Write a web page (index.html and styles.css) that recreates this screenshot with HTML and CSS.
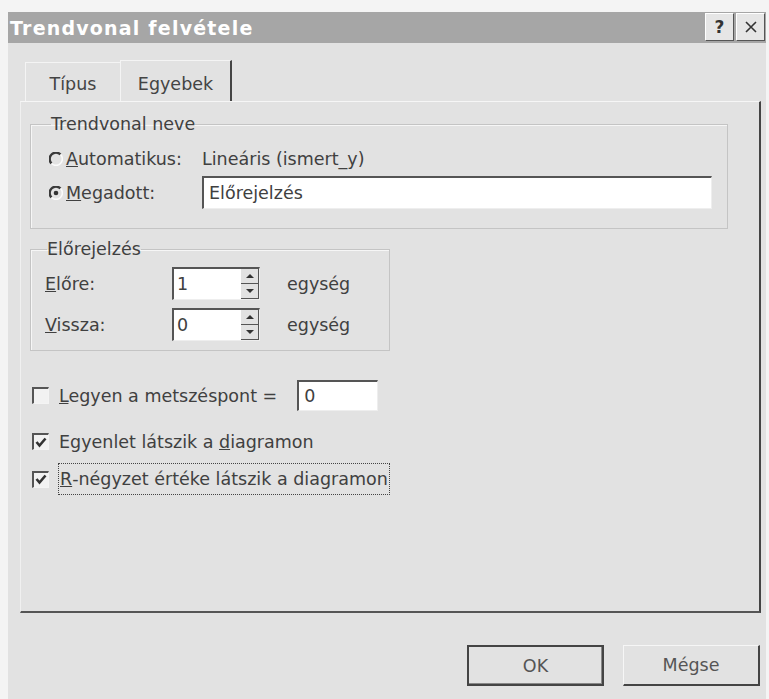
FILE: index.html
```html
<!DOCTYPE html>
<html lang="hu">
<head>
<meta charset="utf-8">
<title>Trendvonal felvétele</title>
<link rel="stylesheet" href="styles.css">
</head>
<body>
<div class="screen">
  <div class="window">
    <div class="titlebar">
      <span class="title">Trendvonal felvétele</span>
      <div class="caption-btns">
        <span class="cbtn">?</span>
        <span class="cbtn">
          <svg width="14" height="14" viewBox="0 0 14 14"><path d="M2 2 L12 12 M12 2 L2 12" stroke="#333" stroke-width="1.6" fill="none"/></svg>
        </span>
      </div>
    </div>

    <div class="tabs">
      <div class="tab">Típus</div>
      <div class="tab active">Egyebek</div>
    </div>

    <div class="panel">
      <fieldset class="group name-group">
        <legend>Trendvonal neve</legend>
        <div class="row radio-row">
          <svg class="radio" width="14" height="14" viewBox="0 0 14 14"><path d="M11.5 2.5 A6 6 0 1 0 2.5 11.5" stroke="#3a3a3a" stroke-width="2.4" fill="none"/><path d="M2.5 11.5 A6 6 0 0 0 11.5 2.5" stroke="#fafafa" stroke-width="1.6" fill="none"/></svg>
          <span class="label"><u>A</u>utomatikus:</span>
          <span class="value">Lineáris (ismert_y)</span>
        </div>
        <div class="row radio-row">
          <svg class="radio" width="14" height="14" viewBox="0 0 14 14"><path d="M11.5 2.5 A6 6 0 1 0 2.5 11.5" stroke="#3a3a3a" stroke-width="2.4" fill="none"/><path d="M2.5 11.5 A6 6 0 0 0 11.5 2.5" stroke="#fafafa" stroke-width="1.6" fill="none"/><circle cx="7" cy="7" r="2.3" fill="#333"/></svg>
          <span class="label"><u>M</u>egadott:</span>
          <span class="textbox name-box">Előrejelzés</span>
        </div>
      </fieldset>

      <fieldset class="group forecast-group">
        <legend>Előrejelzés</legend>
        <div class="row spin-row">
          <span class="spin-label"><u>E</u>lőre:</span>
          <span class="spin">
            <span class="spin-value">1</span>
            <span class="spin-arrows">
              <span class="arrow up"></span>
              <span class="arrow down"></span>
            </span>
          </span>
          <span class="unit">egység</span>
        </div>
        <div class="row spin-row">
          <span class="spin-label"><u>V</u>issza:</span>
          <span class="spin">
            <span class="spin-value">0</span>
            <span class="spin-arrows">
              <span class="arrow up"></span>
              <span class="arrow down"></span>
            </span>
          </span>
          <span class="unit">egység</span>
        </div>
      </fieldset>

      <div class="checks">
        <div class="check-row">
          <span class="checkbox"></span>
          <span class="check-text"><u>L</u>egyen a metszéspont =</span>
          <span class="textbox intercept-box">0</span>
        </div>
        <div class="check-row">
          <span class="checkbox checked"><svg width="12" height="11" viewBox="0 0 12 11"><path d="M1.5 5 L4.5 8.5 L10.5 1.5" stroke="#333" stroke-width="2.6" fill="none"/></svg></span>
          <span class="check-text">Egyenlet látszik a <u>d</u>iagramon</span>
        </div>
        <div class="check-row">
          <span class="checkbox checked"><svg width="12" height="11" viewBox="0 0 12 11"><path d="M1.5 5 L4.5 8.5 L10.5 1.5" stroke="#333" stroke-width="2.6" fill="none"/></svg></span>
          <span class="check-text focused"><u>R</u>-négyzet értéke látszik a diagramon</span>
        </div>
      </div>
    </div>

    <div class="buttons">
      <span class="btn default">OK</span>
      <span class="btn">Mégse</span>
    </div>
  </div>
</div>
</body>
</html>
```
FILE: styles.css
```css
html, body {
  margin: 0;
  padding: 0;
  background: #f4f4f4;
}

.screen {
  padding-top: 12px;
  padding-left: 8px;
  font-family: "DejaVu Sans", Verdana, sans-serif;
  font-size: 17.5px;
  color: #404040;
}

.window {
  width: 758px;
  height: 700px;
  background: #e2e2e2;
  display: flex;
  flex-direction: column;
}

/* caption */
.titlebar {
  height: 31px;
  background: #a6a6a6;
  display: flex;
  align-items: center;
  justify-content: space-between;
}

.title {
  color: #fff;
  font-weight: bold;
  font-size: 19px;
  padding-left: 2px;
  letter-spacing: 1.2px;
}

.caption-btns {
  display: flex;
  gap: 2px;
  padding-right: 1px;
  align-self: stretch;
  padding-top: 1px;
  padding-bottom: 2px;
}

.cbtn {
  width: 27px;
  background: #e6e6e6;
  border-right: 1px solid #555;
  border-bottom: 1px solid #555;
  border-top: 1px solid #fff;
  border-left: 1px solid #fff;
  display: flex;
  align-items: center;
  justify-content: center;
  font-weight: bold;
  font-size: 17px;
  color: #333;
}

/* tab strip */
.tabs {
  height: 58px;
  box-sizing: border-box;
  padding-top: 19px;
  padding-left: 17px;
  display: flex;
  align-items: stretch;
}

.tab {
  width: 95px;
  display: flex;
  align-items: center;
  justify-content: center;
  padding-top: 3px;
  box-sizing: border-box;
  border-top: 1px solid #f4f4f4;
  border-left: 1px solid #f4f4f4;
  color: #444;
}

.tab.active {
  width: 112px;
  border-right: 2px solid #444;
  margin-top: -2px;
  padding-top: 5px;
}

/* page body */
.panel {
  margin-left: 12px;
  width: 741px;
  height: 512px;
  box-sizing: border-box;
  border-top: 1px solid #f6f6f6;
  border-left: 1px solid #f0f0f0;
  border-right: 2px solid #444;
  border-bottom: 2px solid #555;
  padding: 13px 0 0 9px;
}

.group {
  margin: 0;
  border: 1px solid #c4c4c4;
  box-shadow: inset 1px 1px 0 #f6f6f6;
  box-sizing: border-box;
}

.group legend {
  padding: 0;
  margin-left: 2px;
  line-height: 18px;
  color: #404040;
}

.name-group {
  width: 698px;
  height: 114px;
  padding: 13px 0 0 18px;
}

.row {
  display: flex;
  align-items: center;
}

.radio-row {
  height: 26px;
}

.radio-row + .radio-row {
  margin-top: 4px;
  height: 33px;
}

.radio {
  flex: none;
  margin-right: 3px;
}

.label {
  width: 136px;
  flex: none;
}

.textbox {
  box-sizing: border-box;
  background: #fff;
  border-top: 2px solid #555;
  border-left: 2px solid #555;
  border-right: 1px solid #eee;
  border-bottom: 1px solid #eee;
  display: flex;
  align-items: center;
  padding-left: 5px;
  color: #404040;
}

.name-box {
  width: 510px;
  height: 33px;
}

.forecast-group {
  margin-top: 11px;
  width: 360px;
  height: 111px;
  padding: 9px 0 0 14px;
}

.spin-row {
  height: 33px;
}

.spin-row + .spin-row {
  margin-top: 8px;
}

.spin-label {
  width: 127px;
  flex: none;
}

.spin {
  width: 88px;
  height: 33px;
  box-sizing: border-box;
  border-top: 2px solid #555;
  border-left: 2px solid #555;
  border-right: 1px solid #eee;
  border-bottom: 1px solid #eee;
  display: flex;
  background: #fff;
}

.spin-value {
  flex: 1;
  display: flex;
  align-items: center;
  padding-left: 3px;
}

.spin-arrows {
  width: 18px;
  display: flex;
  flex-direction: column;
  background: #e2e2e2;
}

.arrow {
  flex: 1;
  display: flex;
  align-items: center;
  justify-content: center;
  border-right: 1px solid #555;
  border-bottom: 1px solid #555;
}

.arrow.up::after {
  content: "";
  border-left: 4px solid transparent;
  border-right: 4px solid transparent;
  border-bottom: 4px solid #333;
}

.arrow.down::after {
  content: "";
  border-left: 4px solid transparent;
  border-right: 4px solid transparent;
  border-top: 4px solid #333;
}

.unit {
  margin-left: 27px;
}

/* check boxes */
.checks {
  margin-top: 29px;
  padding-left: 2px;
  display: flex;
  flex-direction: column;
}

.check-row {
  display: flex;
  align-items: center;
  height: 31px;
}

.check-row + .check-row {
  margin-top: 15px;
}

.check-row:last-child {
  margin-top: 6px;
  height: 32px;
}

.checkbox {
  width: 17px;
  height: 17px;
  box-sizing: border-box;
  border-top: 2px solid #555;
  border-left: 2px solid #555;
  border-right: 1px solid #f4f4f4;
  border-bottom: 1px solid #f4f4f4;
  background: #f2f2f2;
  margin-right: 10px;
  display: flex;
  align-items: center;
  justify-content: center;
  flex: none;
}

.check-text {
  white-space: nowrap;
}

.check-text.focused {
  border: 1px dotted #444;
  height: 32px;
  box-sizing: border-box;
  display: flex;
  align-items: center;
  padding: 0 1px;
  margin-left: -1px;
}

.intercept-box {
  margin-left: 20px;
  width: 81px;
  height: 31px;
}

/* dialog buttons */
.buttons {
  display: flex;
  justify-content: flex-end;
  gap: 19px;
  margin-top: 32px;
  padding-right: 6px;
}

.btn {
  width: 137px;
  height: 41px;
  box-sizing: border-box;
  display: flex;
  align-items: center;
  justify-content: center;
  border-top: 1px solid #f6f6f6;
  border-left: 1px solid #f6f6f6;
  border-right: 2px solid #444;
  border-bottom: 2px solid #444;
  color: #555;
}

.btn.default {
  border: 2px solid #444;
  box-shadow: inset -1px -1px 0 #888;
}
```
